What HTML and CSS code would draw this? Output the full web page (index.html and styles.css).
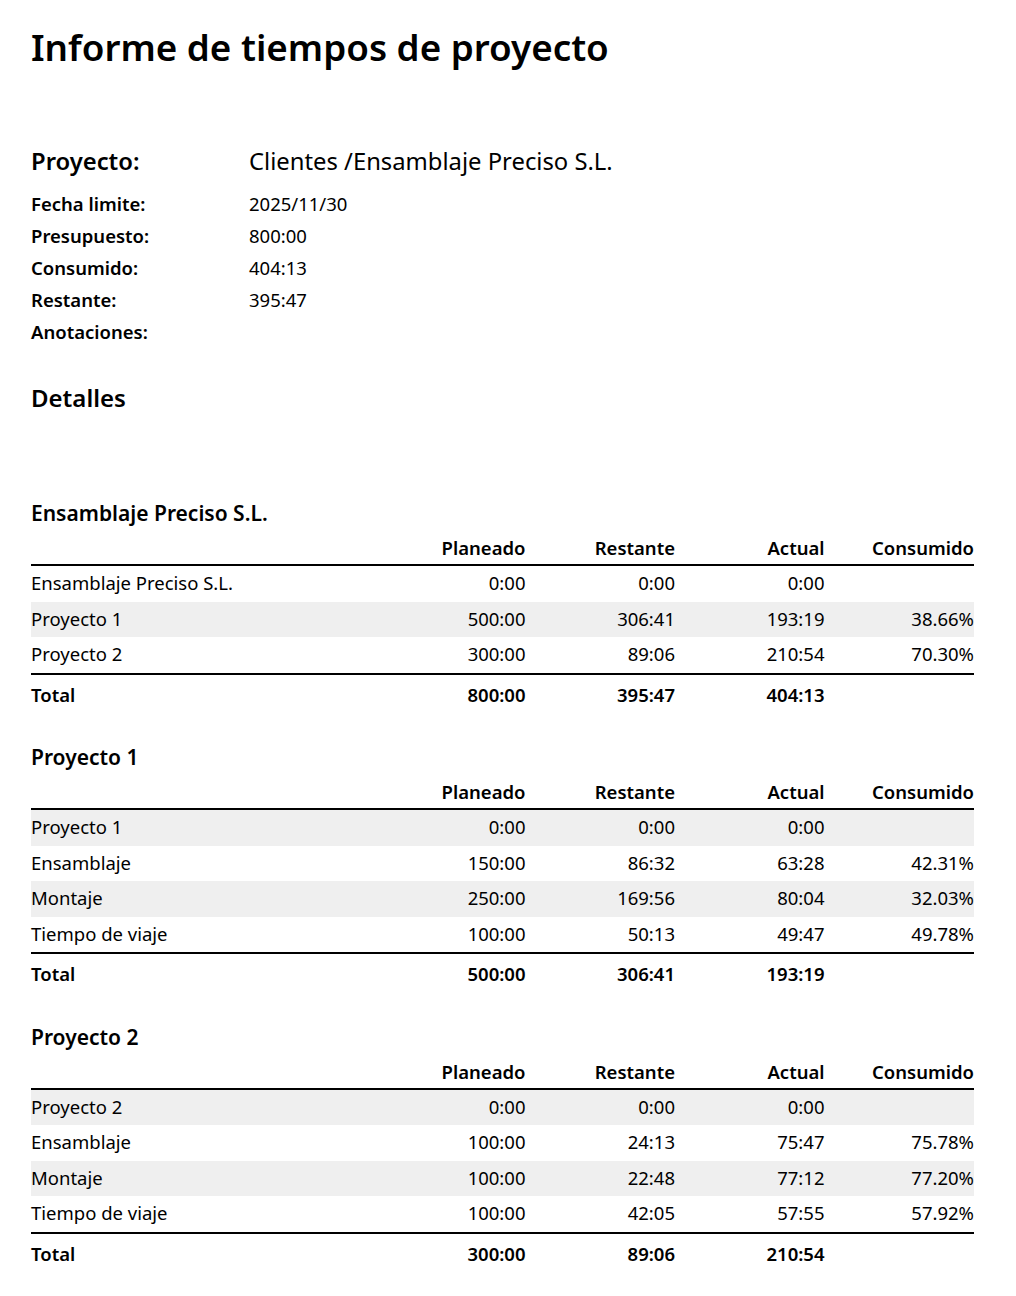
FILE: index.html
```html
<!DOCTYPE html>
<html lang="es">
<head>
<meta charset="utf-8">
<title>Informe de tiempos de proyecto</title>
<link rel="stylesheet" href="styles.css">
</head>
<body>
<div class="page">
  <h1 class="title">Informe de tiempos de proyecto</h1>

  <div class="project-row">
    <div class="project-label">Proyecto:</div>
    <div class="project-value">Clientes /Ensamblaje Preciso S.L.</div>
  </div>

  <div class="info">
    <div class="info-row"><div class="info-label">Fecha limite:</div><div class="info-value">2025/11/30</div></div>
    <div class="info-row"><div class="info-label">Presupuesto:</div><div class="info-value">800:00</div></div>
    <div class="info-row"><div class="info-label">Consumido:</div><div class="info-value">404:13</div></div>
    <div class="info-row"><div class="info-label">Restante:</div><div class="info-value">395:47</div></div>
    <div class="info-row"><div class="info-label">Anotaciones:</div><div class="info-value"></div></div>
  </div>

  <h2 class="details">Detalles</h2>

  <section class="block first">
    <h3 class="block-title">Ensamblaje Preciso S.L.</h3>
    <table class="report">
      <thead>
        <tr><th class="c-name"></th><th class="c-num">Planeado</th><th class="c-num">Restante</th><th class="c-num">Actual</th><th class="c-num">Consumido</th></tr>
      </thead>
      <tbody>
        <tr><td>Ensamblaje Preciso S.L.</td><td class="num">0:00</td><td class="num">0:00</td><td class="num">0:00</td><td class="num"></td></tr>
        <tr class="stripe"><td>Proyecto 1</td><td class="num">500:00</td><td class="num">306:41</td><td class="num">193:19</td><td class="num">38.66%</td></tr>
        <tr><td>Proyecto 2</td><td class="num">300:00</td><td class="num">89:06</td><td class="num">210:54</td><td class="num">70.30%</td></tr>
      </tbody>
      <tfoot>
        <tr><td>Total</td><td class="num">800:00</td><td class="num">395:47</td><td class="num">404:13</td><td class="num"></td></tr>
      </tfoot>
    </table>
  </section>

  <section class="block">
    <h3 class="block-title">Proyecto 1</h3>
    <table class="report">
      <thead>
        <tr><th class="c-name"></th><th class="c-num">Planeado</th><th class="c-num">Restante</th><th class="c-num">Actual</th><th class="c-num">Consumido</th></tr>
      </thead>
      <tbody>
        <tr class="stripe"><td>Proyecto 1</td><td class="num">0:00</td><td class="num">0:00</td><td class="num">0:00</td><td class="num"></td></tr>
        <tr><td>Ensamblaje</td><td class="num">150:00</td><td class="num">86:32</td><td class="num">63:28</td><td class="num">42.31%</td></tr>
        <tr class="stripe"><td>Montaje</td><td class="num">250:00</td><td class="num">169:56</td><td class="num">80:04</td><td class="num">32.03%</td></tr>
        <tr><td>Tiempo de viaje</td><td class="num">100:00</td><td class="num">50:13</td><td class="num">49:47</td><td class="num">49.78%</td></tr>
      </tbody>
      <tfoot>
        <tr><td>Total</td><td class="num">500:00</td><td class="num">306:41</td><td class="num">193:19</td><td class="num"></td></tr>
      </tfoot>
    </table>
  </section>

  <section class="block">
    <h3 class="block-title">Proyecto 2</h3>
    <table class="report">
      <thead>
        <tr><th class="c-name"></th><th class="c-num">Planeado</th><th class="c-num">Restante</th><th class="c-num">Actual</th><th class="c-num">Consumido</th></tr>
      </thead>
      <tbody>
        <tr class="stripe"><td>Proyecto 2</td><td class="num">0:00</td><td class="num">0:00</td><td class="num">0:00</td><td class="num"></td></tr>
        <tr><td>Ensamblaje</td><td class="num">100:00</td><td class="num">24:13</td><td class="num">75:47</td><td class="num">75.78%</td></tr>
        <tr class="stripe"><td>Montaje</td><td class="num">100:00</td><td class="num">22:48</td><td class="num">77:12</td><td class="num">77.20%</td></tr>
        <tr><td>Tiempo de viaje</td><td class="num">100:00</td><td class="num">42:05</td><td class="num">57:55</td><td class="num">57.92%</td></tr>
      </tbody>
      <tfoot>
        <tr><td>Total</td><td class="num">300:00</td><td class="num">89:06</td><td class="num">210:54</td><td class="num"></td></tr>
      </tfoot>
    </table>
  </section>
</div>
</body>
</html>
```

FILE: styles.css
```css
html, body {
  margin: 0;
  padding: 0;
  background: #ffffff;
}

body {
  font-family: "Noto Sans", "Open Sans", sans-serif;
  color: #000000;
}

.page {
  width: 943px;
  margin-left: 31px;
  padding-top: 23px;
  padding-bottom: 20px;
}

.title {
  margin: 0;
  font-size: 36.8px;
  line-height: 48px;
  font-weight: 600;
}

.project-row {
  display: flex;
  margin-top: 75px;
  font-size: 23.8px;
  line-height: 30px;
}

.project-label {
  width: 218px;
  font-weight: 600;
}

.project-value {
  font-weight: 400;
}

.info {
  margin-top: 12px;
  display: flex;
  flex-direction: column;
}

.info-row {
  display: flex;
  font-size: 18.5px;
  line-height: 32px;
}

.info-label {
  width: 218px;
  font-weight: 600;
}

.info-value {
  font-weight: 400;
}

.details {
  margin: 34px 0 0;
  font-size: 24px;
  line-height: 32px;
  font-weight: 600;
}

.block {
  margin-top: 33px;
}

.block.first {
  margin-top: 85px;
}

.block-title {
  margin: 0 0 8px;
  font-size: 21px;
  line-height: 28px;
  font-weight: 600;
}

.report {
  width: 943px;
  border-collapse: collapse;
  table-layout: fixed;
  font-size: 18.5px;
  line-height: 25.5px;
}

.report th {
  font-weight: 600;
  padding: 0 0 4px;
  line-height: 25px;
  border-bottom: 2px solid #000000;
}

.report th.c-name {
  width: 345px;
  text-align: left;
}

.report th.c-num {
  width: 149.5px;
  text-align: right;
}

.report td {
  padding: 4px 0 6px;
  white-space: nowrap;
}

.report td.num {
  text-align: right;
}

.report tr.stripe td {
  background: #efefef;
}

.report tfoot td {
  border-top: 2px solid #000000;
  font-weight: 600;
  padding: 7px 0 3px;
}
```
